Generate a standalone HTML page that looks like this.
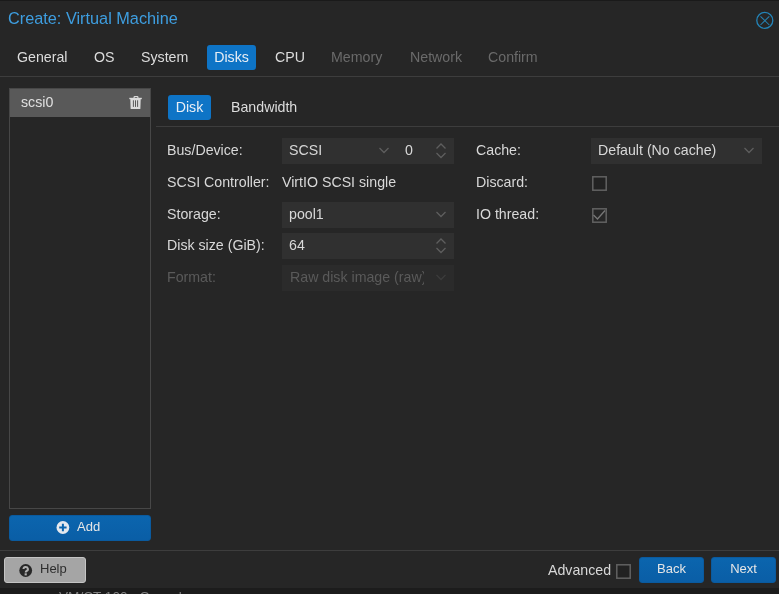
<!DOCTYPE html>
<html><head><meta charset="utf-8">
<style>
*{box-sizing:border-box;margin:0;padding:0}
html,body{width:779px;height:594px;overflow:hidden;background:#262626;font-family:"Liberation Sans",sans-serif;color:#dfdfdf}
.a{position:absolute;white-space:nowrap}
#topline{left:0;top:0;width:779px;height:1px;background:#1a1a1a}
#title{left:8px;top:9px;font-size:16.3px;color:#3e9ee0;line-height:18px}
#close{left:755px;top:11px;width:20px;height:20px}
.tab{top:45px;height:25px;line-height:25px;font-size:14.2px;color:#dcdcdc}
.tab.dis{color:#6a6a6a}
.tab.act{background:#0e74c6;border-radius:3px;color:#e8eef5}
.hline{height:1px;background:#3d3d3d}
#list{left:9px;top:88px;width:142px;height:421px;border:1px solid #474747}
#sel{left:10px;top:89px;width:140px;height:28px;background:#595959}
.lbl{font-size:14.2px;color:#d8d8d8;line-height:16px}
.field{background:#303030}
.dis2{color:#5a5a5a}
.btn{background:linear-gradient(#0b65ae,#0a5ea6);border:1px solid #0a5a9e;border-radius:3px;color:#e6e6e6;font-size:13px;text-align:center}
.chev{position:absolute}
</style></head><body><div id="wrap" style="position:absolute;left:0;top:0;width:779px;height:594px;will-change:transform">
<div class="a" id="topline"></div>
<div class="a" id="title">Create: Virtual Machine</div>
<svg class="a" id="close" viewBox="0 0 20 20" style="left:755px;top:11px"><circle cx="9.8" cy="9.4" r="8.0" fill="none" stroke="#2384b8" stroke-width="1.3"/><path d="M5.5 5.3L14.3 14M14.3 5.3L5.5 14" stroke="#2780b0" stroke-width="1.05"/></svg>

<div class="a tab" style="left:17px">General</div>
<div class="a tab" style="left:94px">OS</div>
<div class="a tab" style="left:141px">System</div>
<div class="a tab act" style="left:207px;width:49px;text-align:center">Disks</div>
<div class="a tab" style="left:275px">CPU</div>
<div class="a tab dis" style="left:331px">Memory</div>
<div class="a tab dis" style="left:410px">Network</div>
<div class="a tab dis" style="left:488px">Confirm</div>
<div class="a hline" style="left:0;top:76px;width:779px"></div>

<div class="a" id="list"></div>
<div class="a" id="sel"></div>
<div class="a lbl" style="left:21px;top:94px;color:#e0e0e0">scsi0</div>
<svg class="a" style="left:128px;top:95px" width="15" height="15" viewBox="0 0 15 15"><rect x="6.1" y="1.5" width="3.8" height="2.2" rx="0.7" fill="none" stroke="#dcdcdc" stroke-width="1.2"/><path d="M1.3 2.8h12.5v1.4H1.3z" fill="#dcdcdc"/><path d="M2.3 4.1h10.4l-.3 9.3q0 .6-.6.6H3.2q-.6 0-.6-.6z" fill="#dcdcdc"/><path d="M5.4 5.3v6.6M7.5 5.3v6.6M9.6 5.3v6.6" stroke="#595959" stroke-width="1"/></svg>

<div class="a btn" style="left:9px;top:515px;width:142px;height:26px"></div>
<svg class="a" style="left:56px;top:521px" width="14" height="14" viewBox="0 0 14 14"><circle cx="6.9" cy="6.5" r="6.4" fill="#e4e8ee"/><path d="M6.9 2.8v7.4M3.2 6.5h7.4" stroke="#0b64ad" stroke-width="2"/></svg>
<div class="a" style="left:77px;top:519px;font-size:13px;color:#e6e6e6;line-height:15px">Add</div>

<div class="a tab act" style="left:168px;top:95px;width:43px;text-align:center">Disk</div>
<div class="a tab" style="left:231px;top:95px">Bandwidth</div>
<div class="a hline" style="left:156px;top:126px;width:623px"></div>

<div class="a lbl" style="left:167px;top:142px">Bus/Device:</div>
<div class="a field" style="left:282px;top:138px;width:172px;height:26px"></div>
<div class="a lbl" style="left:289px;top:142px">SCSI</div>
<svg class="chev" style="left:378px;top:146px" width="12" height="9" viewBox="0 0 12 9"><path d="M1.5 2l4.5 4.5L10.5 2" fill="none" stroke="#5e5e5e" stroke-width="1.3"/></svg>
<div class="a lbl" style="left:405px;top:142px">0</div>
<svg class="chev" style="left:435px;top:142px" width="12" height="18" viewBox="0 0 12 18"><path d="M1.5 6.5L6 2l4.5 4.5M1.5 11l4.5 4.5L10.5 11" fill="none" stroke="#5e5e5e" stroke-width="1.3"/></svg>

<div class="a lbl" style="left:167px;top:174px">SCSI Controller:</div>
<div class="a lbl" style="left:282px;top:174px">VirtIO SCSI single</div>

<div class="a lbl" style="left:167px;top:206px">Storage:</div>
<div class="a field" style="left:282px;top:202px;width:172px;height:26px"></div>
<div class="a lbl" style="left:289px;top:206px">pool1</div>
<svg class="chev" style="left:435px;top:210px" width="12" height="9" viewBox="0 0 12 9"><path d="M1.5 2l4.5 4.5L10.5 2" fill="none" stroke="#5e5e5e" stroke-width="1.3"/></svg>

<div class="a lbl" style="left:167px;top:237px">Disk size (GiB):</div>
<div class="a field" style="left:282px;top:233px;width:172px;height:26px"></div>
<div class="a lbl" style="left:289px;top:237px">64</div>
<svg class="chev" style="left:435px;top:237px" width="12" height="18" viewBox="0 0 12 18"><path d="M1.5 6.5L6 2l4.5 4.5M1.5 11l4.5 4.5L10.5 11" fill="none" stroke="#5e5e5e" stroke-width="1.3"/></svg>

<div class="a lbl dis2" style="left:167px;top:269px">Format:</div>
<div class="a field" style="left:282px;top:265px;width:172px;height:26px;background:#2b2b2b"></div>
<div class="a lbl dis2" style="left:290px;top:269px;width:133.5px;overflow:hidden">Raw disk image (raw)</div>
<svg class="chev" style="left:435px;top:273px" width="12" height="9" viewBox="0 0 12 9"><path d="M1.5 2l4.5 4.5L10.5 2" fill="none" stroke="#3c3c3c" stroke-width="1.3"/></svg>

<div class="a lbl" style="left:476px;top:142px">Cache:</div>
<div class="a field" style="left:591px;top:138px;width:171px;height:26px"></div>
<div class="a lbl" style="left:598px;top:142px">Default (No cache)</div>
<svg class="chev" style="left:743px;top:146px" width="12" height="9" viewBox="0 0 12 9"><path d="M1.5 2l4.5 4.5L10.5 2" fill="none" stroke="#5e5e5e" stroke-width="1.3"/></svg>
<div class="a lbl" style="left:476px;top:174px">Discard:</div>
<svg class="a" style="left:591.5px;top:175.5px" width="15" height="15" viewBox="0 0 15 15"><rect x="0.8" y="0.8" width="13.4" height="13.4" fill="#222" stroke="#626262" stroke-width="1.5"/></svg>
<div class="a lbl" style="left:476px;top:206px">IO thread:</div>
<svg class="a" style="left:591.5px;top:207.5px" width="15" height="15" viewBox="0 0 15 15"><rect x="0.8" y="0.8" width="13.4" height="13.4" fill="none" stroke="#626262" stroke-width="1.5"/></svg>
<svg class="a" style="left:592px;top:208px" width="14" height="14" viewBox="0 0 14 14"><path d="M1.5 7l4 4L13 2.5" fill="none" stroke="#777" stroke-width="1.3"/></svg>

<div class="a hline" style="left:0;top:550px;width:779px"></div>
<div class="a" style="left:4px;top:557px;width:82px;height:26px;background:#a5a5a5;border:1px solid #c4c4c4;border-radius:3px"></div>
<svg class="a" style="left:19px;top:564px" width="14" height="14" viewBox="0 0 14 14"><circle cx="6.7" cy="6.5" r="6.4" fill="#282828"/><path d="M4.5 5.1a2.2 2.1 0 1 1 3.1 1.9c-.7.35-.9.7-.9 1.5" fill="none" stroke="#b0b0b0" stroke-width="2"/><rect x="5.6" y="9.3" width="2.2" height="2.1" fill="#b0b0b0"/></svg>
<div class="a" style="left:40px;top:561px;font-size:13px;color:#2e2e2e;line-height:15px">Help</div>
<div class="a lbl" style="left:548px;top:562px">Advanced</div>
<svg class="a" style="left:615.5px;top:563.5px" width="15" height="15" viewBox="0 0 15 15"><rect x="0.8" y="0.8" width="13.4" height="13.4" fill="#222" stroke="#626262" stroke-width="1.5"/></svg>
<div class="a btn" style="left:639px;top:557px;width:65px;height:26px;line-height:22px">Back</div>
<div class="a btn" style="left:711px;top:557px;width:65px;height:26px;line-height:22px">Next</div>
<div class="a" style="left:0;top:588px;width:779px;height:6px;background:#1c1c1c;overflow:hidden"><div class="a" style="left:59px;top:1px;font-size:13.6px;color:#808080">VM/CT 100 - Console</div></div>
</div></body></html>
